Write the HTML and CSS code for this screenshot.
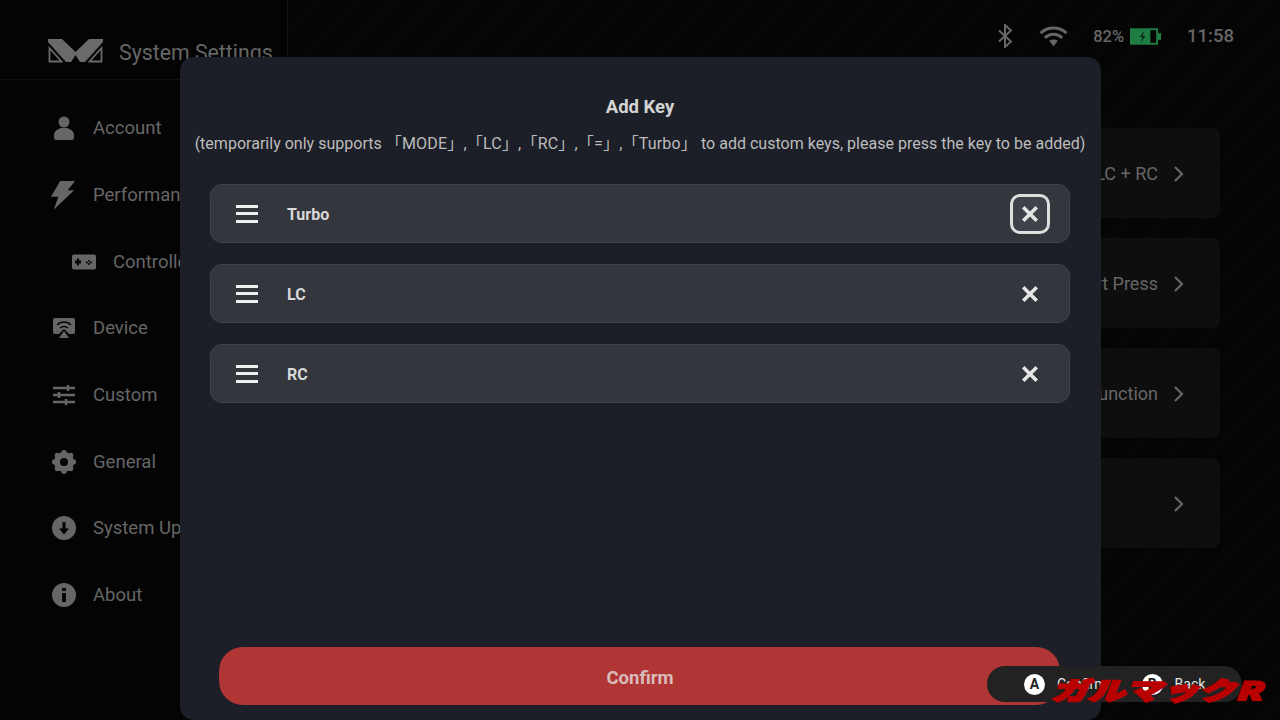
FILE: index.html
```html
<!DOCTYPE html>
<html lang="en">
<head>
<meta charset="utf-8">
<title>System Settings</title>
<link rel="stylesheet" href="styles.css">
</head>
<body>
<div class="app">
  <aside class="sidebar">
    <div class="brand">
      <svg class="logo" viewBox="0 0 55 24"><path fill="#6a6a6a" d="M0 0H14L27.500 13 41 0H55V3L37 23H32L27.500 16 23 23H18L0 3z"/><path d="M1.500 9V22.500H13.500zM53.500 9V22.500H41.500z" fill="none" stroke="#6a6a6a" stroke-width="1.800"/></svg>
      <span class="brand-name">System Settings</span>
    </div>
    <nav class="nav">
      <div class="nav-item"><svg class="nav-icon" viewBox="0 0 24 24"><circle cx="12" cy="6" r="5.500"/><path d="M2 22v-3c0-4 4-6 7-7h6c3 1 7 3 7 7v3a2 2 0 0 1-2 2H4a2 2 0 0 1-2-2z"/></svg><span>Account</span></div>
      <div class="nav-item"><svg class="nav-icon bolt" viewBox="0 0 28 32"><path d="M11 1h16l-8 10h7L4 32l5-14H1z"/></svg><span>Performance</span></div>
      <div class="nav-item sub"><svg class="nav-icon pad" viewBox="0 0 24 15"><path fill-rule="evenodd" d="M2 0h20a2 2 0 0 1 2 2v11a2 2 0 0 1-2 2H2a2 2 0 0 1-2-2V2a2 2 0 0 1 2-2zM5 6H3v3h2v2h2V9h2V6H7V4H5zm11 .5a1 1 0 1 0 2 0 1 1 0 0 0-2 0zm0 3a1 1 0 1 0 2 0 1 1 0 0 0-2 0zm-2-1.500a1 1 0 1 0 2 0 1 1 0 0 0-2 0zm4 0a1 1 0 1 0 2 0 1 1 0 0 0-2 0z"/></svg><span>Controller</span></div>
      <div class="nav-item"><svg class="nav-icon" viewBox="0 0 24 20"><path d="M3 0h18a2 2 0 0 1 2 2v12a2 2 0 0 1-2 2h-4l-5-5-5 5H3a2 2 0 0 1-2-2V2a2 2 0 0 1 2-2z"/><path d="M12 13l5 7H7z"/><path d="M5 7c4-4 10-4 14 0M8 10c2.500-2 5.500-2 8 0" fill="none" stroke="#040404" stroke-width="1.500"/></svg><span>Device</span></div>
      <div class="nav-item"><svg class="nav-icon" viewBox="0 0 24 22"><path d="M1 4h22M1 11h22M1 18h22" stroke="#666" stroke-width="2.500"/><path d="M16 1v6M7 8v6M14 15v6" stroke="#666" stroke-width="2.500"/></svg><span>Custom</span></div>
      <div class="nav-item"><svg class="nav-icon" viewBox="0 0 24 24"><circle cx="12" cy="12" r="7" fill="none" stroke="#666" stroke-width="6"/><circle cx="12" cy="2.700" r="2.700"/><circle cx="12" cy="21.300" r="2.700"/><circle cx="2.700" cy="12" r="2.700"/><circle cx="21.300" cy="12" r="2.700"/><circle cx="5.400" cy="5.400" r="2.700"/><circle cx="18.600" cy="5.400" r="2.700"/><circle cx="5.400" cy="18.600" r="2.700"/><circle cx="18.600" cy="18.600" r="2.700"/></svg><span>General</span></div>
      <div class="nav-item"><svg class="nav-icon" viewBox="0 0 24 24"><path fill-rule="evenodd" d="M12 0a12 12 0 1 1 0 24 12 12 0 0 1 0-24zM10.500 6v6.500H7l5 6 5-6h-3.500V6z"/></svg><span>System Update</span></div>
      <div class="nav-item"><svg class="nav-icon" viewBox="0 0 24 24"><path fill-rule="evenodd" d="M12 0a12 12 0 1 1 0 24 12 12 0 0 1 0-24zM10 5v3h4V5zm0 5v9h4v-9z"/></svg><span>About</span></div>
    </nav>
  </aside>
  <main class="main">
    <header class="status">
      <svg class="st-bt" viewBox="0 0 16 24"><path d="M2 6.500l12 11L8 23V1l6 5.500-12 11" fill="none" stroke="#666" stroke-width="2"/></svg>
      <svg class="st-wifi" viewBox="0 0 30 22"><path d="M1.500 8c8-7 19-7 27 0M6 13c5.500-5 12.500-5 18 0" fill="none" stroke="#666" stroke-width="3"/><path d="M10.500 16c2.500-2 6.500-2 9 0L15 21.500z" fill="#666"/></svg>
      <span class="st-pct">82%</span>
      <svg class="st-batt" viewBox="0 0 32 17"><rect x="0" y="0" width="20" height="17" fill="#1e7d42"/><rect x="20" y="1" width="8" height="15" fill="none" stroke="#1e7d42" stroke-width="2"/><rect x="28.500" y="5" width="3.500" height="7" fill="#1e7d42"/><path d="M15 2l-5 7h3l-2 6 5-7h-3z" fill="#0c2a16"/></svg>
      <span class="st-time">11:58</span>
    </header>
    <section class="cards">
      <div class="card"><span>LC + RC</span><svg class="chev" viewBox="0 0 12 18"><path d="M2 2l7 7-7 7" fill="none" stroke="#666" stroke-width="2.200"/></svg></div>
      <div class="card"><span>Short Press</span><svg class="chev" viewBox="0 0 12 18"><path d="M2 2l7 7-7 7" fill="none" stroke="#666" stroke-width="2.200"/></svg></div>
      <div class="card"><span>Function</span><svg class="chev" viewBox="0 0 12 18"><path d="M2 2l7 7-7 7" fill="none" stroke="#666" stroke-width="2.200"/></svg></div>
      <div class="card"><svg class="chev" viewBox="0 0 12 18"><path d="M2 2l7 7-7 7" fill="none" stroke="#666" stroke-width="2.200"/></svg></div>
    </section>
  </main>
</div>

<div class="modal">
  <h1 class="modal-title">Add Key</h1>
  <p class="modal-note">(temporarily only supports <span class="keys">「MODE」,「LC」,「RC」,「=」,「Turbo」</span> to add custom keys, please press the key to be added)</p>
  <div class="key-list">
    <div class="key-row">
      <span class="burger"><i></i><i></i><i></i></span>
      <span class="key-name">Turbo</span>
      <span class="key-del focus"><svg class="x" viewBox="0 0 16 16"><path d="M2 2l12 12M14 2L2 14" stroke="#e4e4e4" stroke-width="3.200"/></svg></span>
    </div>
    <div class="key-row">
      <span class="burger"><i></i><i></i><i></i></span>
      <span class="key-name">LC</span>
      <span class="key-del"><svg class="x" viewBox="0 0 16 16"><path d="M2 2l12 12M14 2L2 14" stroke="#e4e4e4" stroke-width="3.200"/></svg></span>
    </div>
    <div class="key-row">
      <span class="burger"><i></i><i></i><i></i></span>
      <span class="key-name">RC</span>
      <span class="key-del"><svg class="x" viewBox="0 0 16 16"><path d="M2 2l12 12M14 2L2 14" stroke="#e4e4e4" stroke-width="3.200"/></svg></span>
    </div>
  </div>
  <button class="confirm">Confirm</button>
</div>

<div class="hints">
  <span class="hint"><b class="btn-glyph">A</b><span>Confirm</span></span>
  <span class="hint"><b class="btn-glyph">B</b><span>Back</span></span>
</div>

<div class="watermark">ガルマックR</div>
</body>
</html>
```
FILE: styles.css
```css
* { box-sizing: border-box; }
html, body { margin: 0; padding: 0; }
body {
  width: 1280px;
  height: 720px;
  position: relative;
  overflow: hidden;
  background: #040404;
  font-family: Roboto, "Noto Sans CJK SC", sans-serif;
  color: #666666;
}
.app { display: flex; height: 720px; }
.sidebar { width: 288px; flex: none; border-right: 1px solid #121212; }
.brand {
  height: 80px;
  display: flex;
  align-items: center;
  gap: 16px;
  padding: 22px 0 0 48px;
  border-bottom: 1px solid #121212;
}
.logo { width: 55px; height: 24px; flex: none; }
.brand-name { font-size: 21.300px; white-space: nowrap; padding-top: 3px; }
.nav { padding-top: 15px; }
.nav-item {
  height: 66.700px;
  display: flex;
  align-items: center;
  padding-left: 52px;
  font-size: 18.500px;
  white-space: nowrap;
}
.nav-item.sub { padding-left: 72px; }
.nav-icon { width: 24px; height: 24px; fill: #666666; flex: none; margin-right: 17px; }
.nav-icon.bolt { width: 26px; height: 32px; margin-left: -2px; margin-right: 17px; }
.main { flex: 1; background: repeating-linear-gradient(135deg, #040404 0 14px, #060606 14px 28px); }
.status {
  height: 72px;
  display: flex;
  align-items: center;
  padding-right: 46px;
  justify-content: flex-end;
}
.st-bt { width: 16px; height: 24px; margin-right: 26px; }
.st-wifi { width: 29px; height: 22px; margin-right: 25px; }
.st-pct { font-size: 16.500px; font-weight: 500; margin-right: 6px; }
.st-batt { width: 31px; height: 17px; margin-right: 26px; }
.st-time { font-size: 18.500px; font-weight: 500; }
.cards {
  margin: 56px 60px 0 60px;
  display: flex;
  flex-direction: column;
  gap: 20px;
}
.card {
  height: 90px;
  background: #0e0e0e;
  border-radius: 8px;
  display: flex;
  align-items: center;
  justify-content: flex-end;
  padding: 1px 35px 0 0;
  font-size: 18px;
  gap: 15px;
}
.chev { width: 12px; height: 18px; flex: none; }
.modal {
  position: absolute;
  left: 180px;
  top: 57px;
  width: 921px;
  height: 663px;
  background: #1c1f27;
  border-radius: 14px;
  display: flex;
  flex-direction: column;
  align-items: center;
  padding: 0 31px 15px 30px;
}
.modal-title {
  margin: 39px 0 0;
  font-size: 18.500px;
  line-height: 22px;
  font-weight: 700;
  color: #d4d4d4;
}
.modal-note {
  margin: 15px -20px 0;
  font-size: 16.050px;
  line-height: 22px;
  color: #bcbcbc;
  white-space: nowrap;
}
.keys { letter-spacing: 0.170px; }
.key-list {
  align-self: stretch;
  display: flex;
  flex-direction: column;
  gap: 21px;
  margin-top: 29px;
}
.key-row {
  height: 59px;
  background: #33363c;
  border: 1px solid #40434a;
  border-radius: 12px;
  display: flex;
  align-items: center;
  padding: 0 19px 0 25px;
}
.burger {
  width: 22px;
  display: flex;
  flex-direction: column;
  gap: 4.500px;
  margin-right: 29px;
}
.burger i { display: block; height: 3px; background: #f0f0f0; }
.key-name { flex: 1; font-size: 16px; font-weight: 700; color: #d8d8d8; padding-top: 2px; }
.key-del {
  width: 40px;
  height: 40px;
  display: flex;
  align-items: center;
  justify-content: center;
  border-radius: 10px;
}
.key-del.focus { border: 3px solid #dedede; background: #3e424a; }
.x { width: 18px; height: 18px; }
.confirm {
  margin-top: auto;
  align-self: flex-start;
  margin-left: 9px;
  width: 841px;
  height: 58px;
  border: 0;
  border-radius: 24px;
  padding: 3px 0 0 1px;
  background: #b03535;
  color: #d9bcbc;
  font: 700 18.500px Roboto, sans-serif;
}
.hints {
  position: absolute;
  left: 987px;
  top: 666px;
  width: 255px;
  height: 36px;
  border-radius: 18px;
  background: #222222;
  display: flex;
  align-items: center;
  padding-left: 37px;
  gap: 35px;
  font-size: 14px;
  color: #e6e6e6;
}
.hint { display: flex; align-items: center; gap: 12px; }
.btn-glyph {
  width: 21px;
  height: 21px;
  border-radius: 50%;
  background: #fff;
  color: #222;
  font-size: 14px;
  display: flex;
  align-items: center;
  justify-content: center;
}
.watermark {
  position: absolute;
  left: 1051px;
  top: 673px;
  font: italic 900 32px/40px "Noto Sans CJK JP", sans-serif;
  -webkit-text-stroke: 2.500px #b80000;
  color: #b80000;
  white-space: nowrap;
  transform: scale(1.150, 0.780);
  transform-origin: left top;
}
```
